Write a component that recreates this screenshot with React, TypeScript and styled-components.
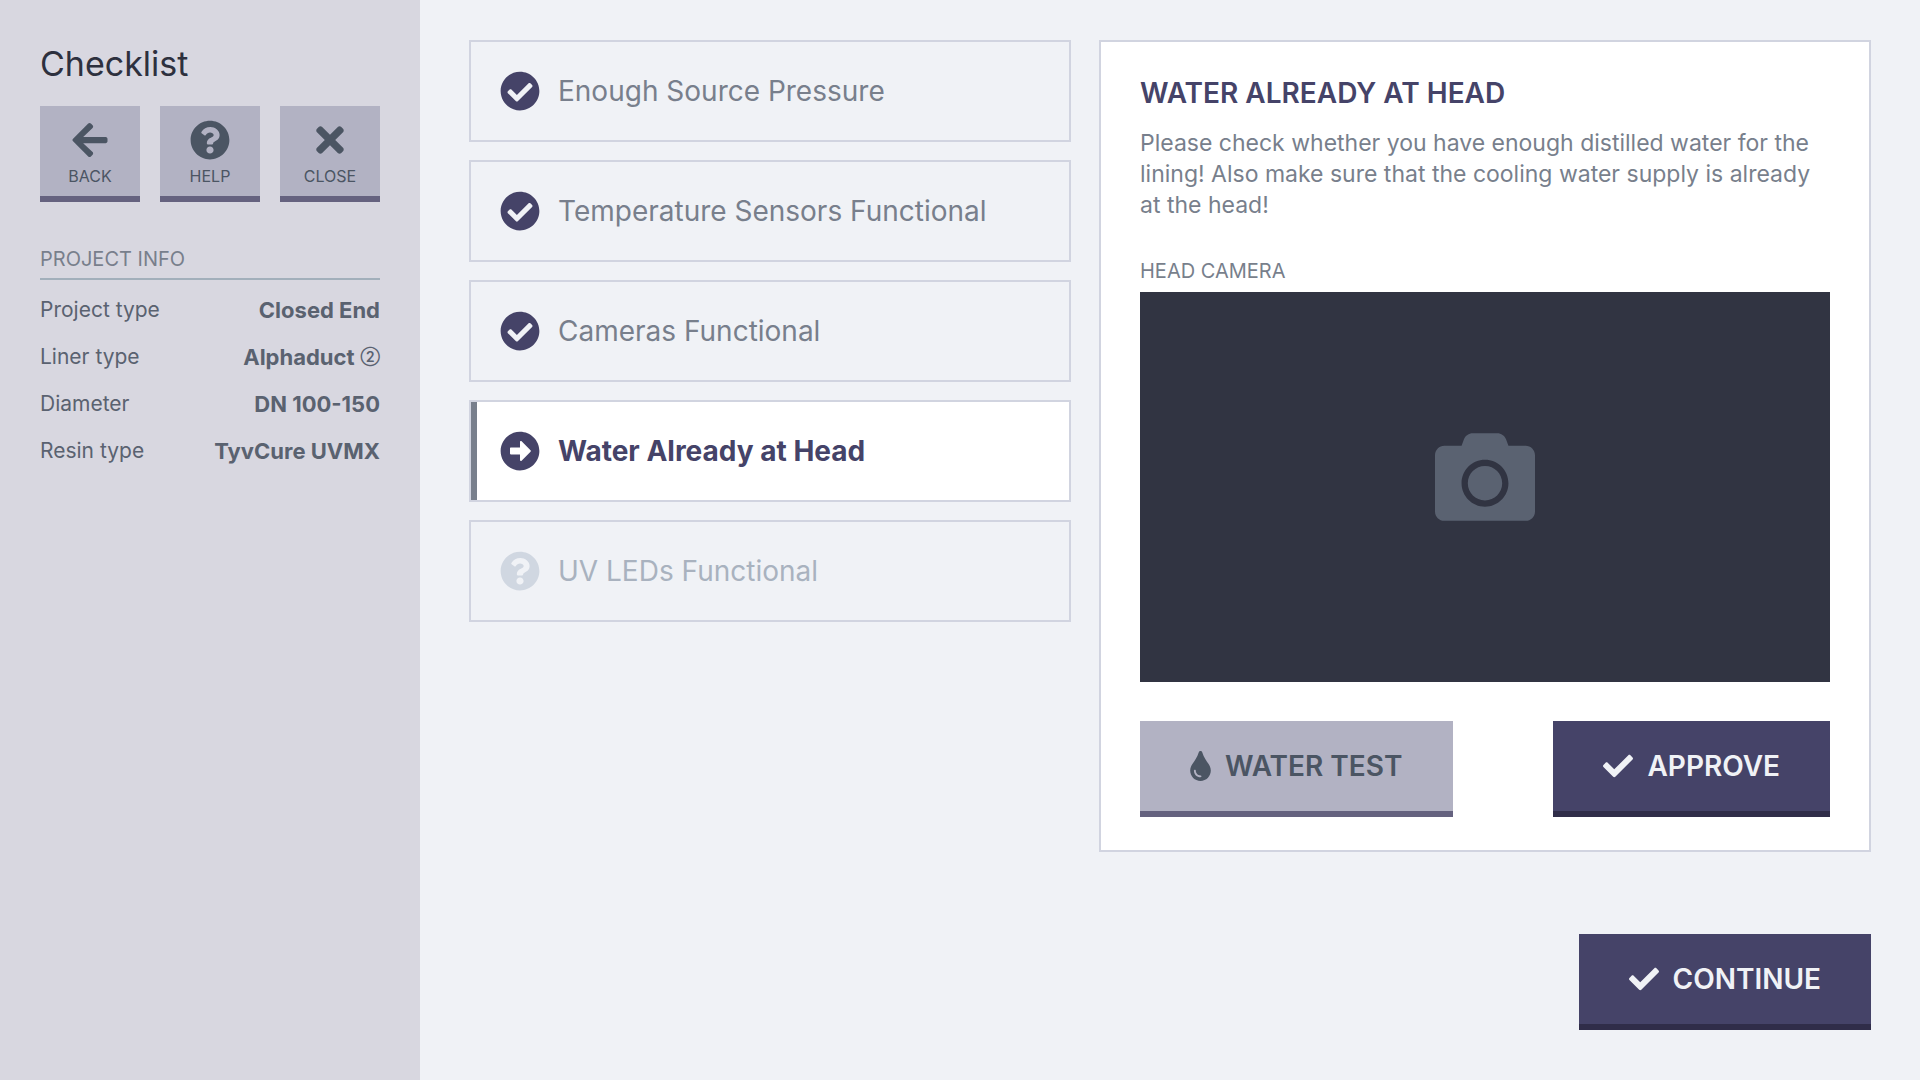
import React from 'react';
import styled, { createGlobalStyle } from 'styled-components';
import {
  FaArrowAltCircleRight,
  FaArrowLeft,
  FaCamera,
  FaCheck,
  FaCheckCircle,
  FaQuestionCircle,
  FaTimes,
  FaTint,
} from 'react-icons/fa';

const color = {
  page: '#f0f2f6',
  sidebar: '#d8d7e0',
  white: '#ffffff',
  ink: '#2d303e',
  slate: '#4b5563',
  slateSoft: '#5a6270',
  grey: '#787f8c',
  greyLight: '#a9b2bf',
  iconMuted: '#d0d7e1',
  outline: '#d1d4e0',
  rule: '#a2afbb',
  lilac: '#b2b2c3',
  lilacEdge: '#65627f',
  indigo: '#454368',
  indigoEdge: '#302d49',
  screen: '#313442',
  screenIcon: '#5a6271',
};

const GlobalStyle = createGlobalStyle`
  *, *::before, *::after { box-sizing: border-box; }
  body {
    margin: 0;
    background: ${color.page};
    font-family: Inter, "Liberation Sans", sans-serif;
  }
  h1, h2, h3, p, dl, dd, ul { margin: 0; padding: 0; }
  button { font: inherit; cursor: pointer; }
  svg { display: block; flex: none; }
`;

const Layout = styled.div`
  display: flex;
  min-height: 100vh;
`;

const Sidebar = styled.aside`
  flex: none;
  width: 420px;
  padding: 40px;
  background: ${color.sidebar};
`;

const PageTitle = styled.h1`
  color: ${color.ink};
  font-size: 34px;
  font-weight: 400;
  line-height: 48px;
`;

const Toolbar = styled.nav`
  display: flex;
  justify-content: space-between;
  margin-top: 18px;
`;

const ToolButton = styled.button`
  display: flex;
  flex-direction: column;
  align-items: center;
  gap: 6px;
  width: 100px;
  height: 96px;
  padding: 14px 0 0;
  border: 0;
  border-bottom: 6px solid ${color.lilacEdge};
  background: ${color.lilac};
  color: ${color.slate};
  font-size: 16px;
  line-height: 20px;
`;

const SectionLabel = styled.h3`
  color: ${color.grey};
  font-size: 20px;
  font-weight: 400;
  line-height: 24px;
`;

const ProjectInfo = styled.section`
  margin-top: 45px;

  ${SectionLabel} {
    padding-bottom: 7px;
    border-bottom: 2px solid ${color.rule};
  }
`;

const InfoList = styled.dl`
  padding-top: 6px;
`;

const InfoRow = styled.div`
  display: flex;
  align-items: center;
  justify-content: space-between;
  height: 47px;
  color: ${color.slateSoft};
`;

const InfoTerm = styled.dt`
  font-size: 21px;
`;

const InfoValue = styled.dd`
  display: flex;
  align-items: center;
  gap: 6px;
  font-size: 22px;
  font-weight: 700;
`;

const Badge = styled.span`
  font-size: 14px;
  font-weight: 600;
`;

const Main = styled.main`
  display: flex;
  flex: 1;
  flex-direction: column;
  padding: 40px 49px 50px;
`;

const Columns = styled.div`
  display: grid;
  grid-template-columns: 602fr 772fr;
  align-items: start;
  gap: 28px;
`;

const Steps = styled.ul`
  display: grid;
  gap: 18px;
  list-style: none;
`;

type StepState = 'done' | 'current' | 'pending';

const textColor = { done: color.grey, current: color.indigo, pending: color.greyLight };

const Step = styled.li<{ $state: StepState }>`
  display: flex;
  align-items: center;
  gap: 18px;
  height: 102px;
  padding: 0 29px;
  border: 2px solid ${color.outline};
  background: ${({ $state }) => ($state === 'current' ? color.white : 'transparent')};
  box-shadow: ${({ $state }) => ($state === 'current' ? `inset 6px 0 ${color.grey}` : 'none')};
  color: ${({ $state }) => textColor[$state]};
  font-size: 28px;
  font-weight: ${({ $state }) => ($state === 'current' ? 700 : 400)};

  svg {
    color: ${({ $state }) => ($state === 'pending' ? color.iconMuted : color.indigo)};
  }
`;

const Card = styled.section`
  padding: 33px 39px;
  border: 2px solid ${color.outline};
  background: ${color.white};
`;

const CardTitle = styled.h2`
  color: ${color.indigo};
  font-size: 28px;
  font-weight: 600;
  line-height: 36px;
  text-transform: uppercase;
`;

const Description = styled.p`
  margin: 17px 0 38px;
  color: ${color.grey};
  font-size: 23px;
  line-height: 31px;
`;

const CameraView = styled.div`
  display: grid;
  place-items: center;
  aspect-ratio: 690 / 390;
  margin-top: 9px;
  padding-bottom: 20px;
  background: ${color.screen};
  color: ${color.screenIcon};
`;

const Actions = styled.div`
  display: flex;
  justify-content: space-between;
  margin-top: 39px;
`;

const ActionButton = styled.button<{ $primary?: boolean }>`
  display: flex;
  align-items: center;
  gap: 14px;
  height: 96px;
  padding: 0 50px;
  border: 0;
  border-bottom: 6px solid ${({ $primary }) => ($primary ? color.indigoEdge : color.lilacEdge)};
  background: ${({ $primary }) => ($primary ? color.indigo : color.lilac)};
  color: ${({ $primary }) => ($primary ? color.page : color.slate)};
  font-size: 28px;
  font-weight: 600;
  text-transform: uppercase;
`;

const DropIcon = styled(FaTint)`
  width: 21px;
  height: 30px;
`;

const CheckIcon = styled(FaCheck)`
  width: 30px;
  height: 30px;
`;

const Footer = styled.footer`
  display: flex;
  justify-content: flex-end;
  margin-top: auto;
  padding-top: 40px;
`;

const tools = [
  { label: 'BACK', Icon: FaArrowLeft },
  { label: 'HELP', Icon: FaQuestionCircle },
  { label: 'CLOSE', Icon: FaTimes },
];

const info: { term: string; value: string; badge?: string }[] = [
  { term: 'Project type', value: 'Closed End' },
  { term: 'Liner type', value: 'Alphaduct', badge: '②' },
  { term: 'Diameter', value: 'DN 100-150' },
  { term: 'Resin type', value: 'TyvCure UVMX' },
];

const steps: { label: string; state: StepState }[] = [
  { label: 'Enough Source Pressure', state: 'done' },
  { label: 'Temperature Sensors Functional', state: 'done' },
  { label: 'Cameras Functional', state: 'done' },
  { label: 'Water Already at Head', state: 'current' },
  { label: 'UV LEDs Functional', state: 'pending' },
];

const stepIcon = {
  done: FaCheckCircle,
  current: FaArrowAltCircleRight,
  pending: FaQuestionCircle,
};

export default function App() {
  return (
    <>
      <GlobalStyle />
      <Layout>
        <Sidebar>
          <PageTitle>Checklist</PageTitle>
          <Toolbar>
            {tools.map(({ label, Icon }) => (
              <ToolButton key={label} type="button">
                <Icon size={40} />
                {label}
              </ToolButton>
            ))}
          </Toolbar>
          <ProjectInfo>
            <SectionLabel>PROJECT INFO</SectionLabel>
            <InfoList>
              {info.map(({ term, value, badge }) => (
                <InfoRow key={term}>
                  <InfoTerm>{term}</InfoTerm>
                  <InfoValue>
                    {value}
                    {badge && <Badge>{badge}</Badge>}
                  </InfoValue>
                </InfoRow>
              ))}
            </InfoList>
          </ProjectInfo>
        </Sidebar>
        <Main>
          <Columns>
            <Steps>
              {steps.map(({ label, state }) => {
                const Icon = stepIcon[state];
                return (
                  <Step
                    key={label}
                    $state={state}
                    aria-current={state === 'current' ? 'step' : undefined}
                  >
                    <Icon size={40} />
                    {label}
                  </Step>
                );
              })}
            </Steps>
            <Card>
              <CardTitle>Water Already at Head</CardTitle>
              <Description>
                Please check whether you have enough distilled water for the lining! Also make sure
                that the cooling water supply is already at the head!
              </Description>
              <SectionLabel>HEAD CAMERA</SectionLabel>
              <CameraView>
                <FaCamera size={100} />
              </CameraView>
              <Actions>
                <ActionButton type="button">
                  <DropIcon />
                  Water test
                </ActionButton>
                <ActionButton type="button" $primary>
                  <CheckIcon />
                  Approve
                </ActionButton>
              </Actions>
            </Card>
          </Columns>
          <Footer>
            <ActionButton type="button" $primary>
              <CheckIcon />
              Continue
            </ActionButton>
          </Footer>
        </Main>
      </Layout>
    </>
  );
}
